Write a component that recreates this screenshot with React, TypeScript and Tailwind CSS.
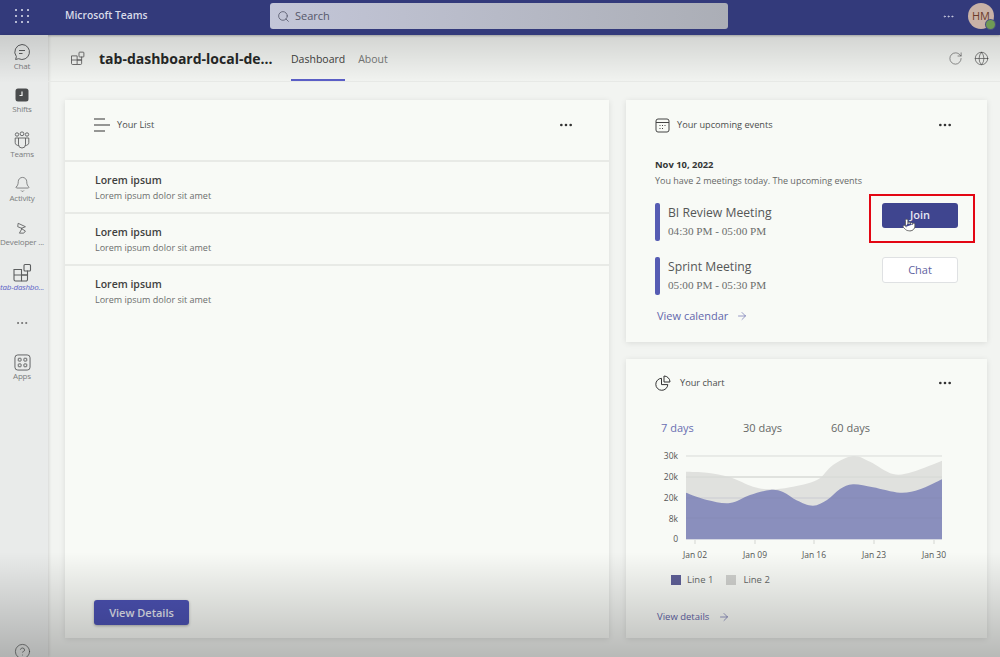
import {
  ArrowRight,
  Bell,
  CircleHelp,
  Globe,
  MoreHorizontal,
  Pointer,
  RotateCw,
  Search,
} from "lucide-react";
import type { ReactNode } from "react";

const purple: [number, number][] = [
  [686, 492.7], [707, 500], [730, 503], [750, 495], [770, 490], [783, 492], [797, 500.5], [813, 505.7],
  [827, 500], [840, 489], [853, 484.3], [873, 487.3], [900, 492.7], [920, 489.3], [942, 479.3],
];
const grey: [number, number][] = [
  [686, 471.7], [707, 472.7], [730, 477.3], [753, 486.7], [770, 489.3], [790, 487.3], [817, 480],
  [833, 465], [853, 456], [870, 461.7], [893, 474], [913, 471.7], [942, 460.7],
];

// catmull-rom to bezier, closed along the baseline
function areaPath(pts: [number, number][], base: number) {
  let d = `M${pts[0][0]} ${base} L${pts[0][0]} ${pts[0][1]}`;
  for (let i = 0; i < pts.length - 1; i++) {
    const p0 = pts[Math.max(i - 1, 0)];
    const p1 = pts[i];
    const p2 = pts[i + 1];
    const p3 = pts[Math.min(i + 2, pts.length - 1)];
    const c1x = p1[0] + (p2[0] - p0[0]) / 6;
    const c1y = p1[1] + (p2[1] - p0[1]) / 6;
    const c2x = p2[0] - (p3[0] - p1[0]) / 6;
    const c2y = p2[1] - (p3[1] - p1[1]) / 6;
    d += ` C${c1x} ${c1y} ${c2x} ${c2y} ${p2[0]} ${p2[1]}`;
  }
  return `${d} L${pts[pts.length - 1][0]} ${base} Z`;
}

function TabIcon({ className }: { className?: string }) {
  return (
    <svg viewBox="0 0 20 20" fill="none" stroke="currentColor" strokeWidth="1.1" className={className}>
      <path d="M2 6.500h7.500V18H3.500A1.500 1.500 0 0 1 2 16.500Z" />
      <path d="M2 12h13.500v4.500a1.500 1.500 0 0 1-1.500 1.500H9.500" />
      <path d="M9.500 12h6V7.500" />
      <rect x="12" y="1.500" width="6.500" height="6.500" rx="1" />
    </svg>
  );
}

function RailItem({ icon, label, className = "", active = false }: { icon: ReactNode; label: string; className?: string; active?: boolean }) {
  return (
    <div className={`flex w-full flex-col items-center ${className}`}>
      <div className="flex h-[18px] items-center justify-center text-[#5c5e5f]">{icon}</div>
      <span className={`text-center text-[8px] leading-[10px] tracking-[-0.2px] whitespace-nowrap ${active ? "italic text-[#5b5fc7]" : "text-[#7b7d7e]"}`}>
        {label}
      </span>
    </div>
  );
}

function Rail() {
  return (
    <aside className="flex w-[48px] shrink-0 flex-col items-center bg-[#e9ebea] pt-[8px] pr-[4px] shadow-[1px_0_3px_rgba(0,0,0,0.12)]">
      <RailItem
        label="Chat"
        icon={
          <svg viewBox="0 0 18 18" fill="none" stroke="currentColor" strokeWidth="1" className="size-[18px]">
            <path d="M9 1.500a7.500 7.500 0 1 1-3.400 14.200l-3 .8.800-2.900A7.500 7.500 0 0 1 9 1.500Z" />
            <path d="M6 7.500h6M6 10.500h3.500" />
          </svg>
        }
      />
      <RailItem
        label="Shifts"
        className="mt-[15px]"
        icon={
          <svg viewBox="0 0 14 14" className="size-[14px]">
            <rect width="13" height="13" x=".5" y=".5" rx="2.500" fill="#4a4c4d" />
            <path d="M7 3.500V7.500H4.500" fill="none" stroke="#f2f4f2" strokeWidth="1.200" />
          </svg>
        }
      />
      <RailItem
        label="Teams"
        className="mt-[17px]"
        icon={
          <svg viewBox="0 0 18 18" fill="none" stroke="currentColor" strokeWidth=".9" className="size-[18px]">
            <circle cx="4" cy="3.500" r="1.700" />
            <circle cx="9" cy="2.800" r="1.900" />
            <circle cx="14" cy="3.500" r="1.700" />
            <path d="M5.500 7h7v6.500a3.500 3.500 0 0 1-7 0Z" />
            <path d="M5.500 7H2.200v4.500A2.800 2.800 0 0 0 6 14.200M12.500 7h3.300v4.500a2.800 2.800 0 0 1-3.800 2.700" />
          </svg>
        }
      />
      <RailItem label="Activity" className="mt-[16px]" icon={<Bell className="size-[17px]" strokeWidth={1} />} />
      <RailItem
        label="Developer ..."
        className="mt-[16px]"
        icon={
          <svg viewBox="0 0 14 14" fill="none" stroke="currentColor" strokeWidth="1" className="size-[12px]">
            <path d="M2.500 1.500 11 5.500 6 7.500l5 3-2 2.500H4l3-5.500-5-2Z" />
          </svg>
        }
      />
      <RailItem label="tab-dashbo..." active className="mt-[17px]" icon={<TabIcon className="size-[20px]" />} />
      <MoreHorizontal className="mt-[24px] size-[14px] text-[#666]" strokeWidth={1.500} />
      <RailItem
        label="Apps"
        className="mt-[23px]"
        icon={
          <svg viewBox="0 0 18 18" fill="none" stroke="currentColor" strokeWidth="1" className="size-[17px]">
            <rect x="1" y="1" width="16" height="16" rx="3" />
            <rect x="4.500" y="4.500" width="3" height="3" rx=".5" />
            <rect x="10.500" y="4.500" width="3" height="3" rx=".5" />
            <rect x="4.500" y="10.500" width="3" height="3" rx=".5" />
            <rect x="10.500" y="10.500" width="3" height="3" rx=".5" />
          </svg>
        }
      />
      <CircleHelp className="mt-auto mb-[-3px] size-[17px] shrink-0 text-[#505252]" strokeWidth={1} />
    </aside>
  );
}

function CardTitle({ icon, title, iconGap }: { icon: ReactNode; title: string; iconGap: string }) {
  return (
    <div className={`flex items-center ${iconGap}`}>
      {icon}
      <span className="flex-1 text-[9.200px] font-medium text-[#4b4d4c]">{title}</span>
      <MoreHorizontal className="size-[16px] text-[#333]" strokeWidth={2} />
    </div>
  );
}

function ListRow({ last = false }: { last?: boolean }) {
  return (
    <div className={`h-[52px] pl-[30px] pt-[11px] ${last ? "" : "border-b-2 border-[#e8eae6]"}`}>
      <p className="text-[10.500px] leading-[15px] font-semibold text-[#3f4140]">Lorem ipsum</p>
      <p className="text-[9px] leading-[15px] text-[#6c6e6d]">Lorem ipsum dolor sit amet</p>
    </div>
  );
}

function Meeting({ title, time, children, className = "" }: { title: string; time: string; children: ReactNode; className?: string }) {
  return (
    <div className={`flex h-[38px] ${className}`}>
      <div className="w-[5px] rounded-[2px] bg-[#565cb3]" />
      <div className="ml-[8px] flex-1">
        <p className="text-[12.200px] leading-[20px] text-[#555756]">{title}</p>
        <p className="font-['Liberation_Serif',serif] text-[11.200px] leading-[16px] text-[#6b6d6c]">{time}</p>
      </div>
      {children}
    </div>
  );
}

function EventsCard() {
  return (
    <section className="h-[242px] bg-[#f8faf6] px-[29px] pt-[17px] shadow-[0_1px_6px_rgba(0,0,0,0.1)]">
      <CardTitle
        iconGap="gap-[7px] pr-[5px]"
        title="Your upcoming events"
        icon={
          <svg viewBox="0 0 15 15" fill="none" stroke="#444" strokeWidth="1" className="size-[15px]">
            <rect x="1" y="1" width="13" height="13" rx="2" />
            <path d="M1 4.500h13" />
            <path d="M4.500 7.500h1M7 7.500h1M9.500 7.500h1M4.500 10.500h1M7 10.500h1" strokeWidth="1.200" />
          </svg>
        }
      />
      <p className="mt-[25px] text-[9.400px] leading-[14px] font-bold text-[#333534]">Nov 10, 2022</p>
      <p className="mt-[2px] text-[9px] leading-[14px] text-[#666867]">You have 2 meetings today. The upcoming events</p>
      <Meeting title="BI Review Meeting" time="04:30 PM - 05:00 PM" className="mt-[15px]">
        <div className="relative h-[25px] w-[76px]">
          <button className="block h-full w-full rounded-[3px] bg-[#3f458f] text-[11px] font-semibold text-[#e6e7f2]">Join</button>
          <div className="absolute -top-[9px] -left-[13px] h-[49px] w-[106px] border-2 border-[#e30613]" />
          <Pointer className="absolute top-[15px] left-[20px] size-[14px] fill-white text-[#555]" strokeWidth={1.300} />
        </div>
      </Meeting>
      <Meeting title="Sprint Meeting" time="05:00 PM - 05:30 PM" className="mt-[16px]">
        <button className="h-[26px] w-[76px] rounded-[3px] border border-[#dfe1e3] bg-white text-[11px] font-medium text-[#5f639f]">
          Chat
        </button>
      </Meeting>
      <div className="mt-[13px] ml-[2px] flex items-center gap-[8px] text-[11px] leading-[16px] font-medium text-[#6367ac]">
        View calendar
        <ArrowRight className="size-[12px]" strokeWidth={1.300} />
      </div>
    </section>
  );
}

function ChartCard() {
  const gridY = [456, 477, 498, 518];
  const ticks = [695, 755, 814, 874, 934];
  const xLabels = ["Jan 02", "Jan 09", "Jan 16", "Jan 23", "Jan 30"];
  const yLabels: [string, number][] = [["30k", 459], ["20k", 480], ["20k", 501], ["8k", 522], ["0", 542]];
  return (
    <section className="min-h-0 flex-1 bg-[#f8faf6] px-[29px] pt-[16px] shadow-[0_1px_6px_rgba(0,0,0,0.1)]">
      <CardTitle
        iconGap="gap-[9px] pr-[5px]"
        title="Your chart"
        icon={
          <svg viewBox="0 0 16 16" fill="none" stroke="#333" strokeWidth="1" className="size-[16px]">
            <path d="M6.500 3.300a6 6 0 1 0 6.300 6.300H6.500Z" />
            <path d="M9 1a6 6 0 0 1 6 6H9Z" />
          </svg>
        }
      />
      <div className="mt-[29px] flex text-[11px] leading-[16px] text-[#666867]">
        <span className="ml-[6px] w-[82px] text-[#6a6eb2]">7 days</span>
        <span className="w-[88px]">30 days</span>
        <span>60 days</span>
      </div>
      <svg viewBox="650 448 310 120" className="mt-[12px] -ml-[5px] h-[120px] w-[310px]">
        {gridY.map((y) => (
          <line key={y} x1="686" x2="942" y1={y} y2={y} stroke="#d9dbd8" strokeWidth="1" />
        ))}
        <path d={areaPath(grey, 539)} fill="#e0e1de" />
        <line x1="686" x2="942" y1="477" y2="477" stroke="#d3d5d2" strokeWidth=".8" />
        <path d={areaPath(purple, 539)} fill="#8a8fbd" />
        {gridY.slice(2).map((y) => (
          <line key={y} x1="686" x2="942" y1={y} y2={y} stroke="#7c81ad" strokeWidth=".6" opacity=".35" />
        ))}
        <line x1="686" x2="942" y1="539.500" y2="539.500" stroke="#d4d6e2" />
        {ticks.map((x, i) => (
          <g key={x}>
            <line x1={x} x2={x} y1="540" y2="544" stroke="#d4d6d2" />
            <text x={x} y="558" textAnchor="middle" fontSize="8.500" fill="#555">{xLabels[i]}</text>
          </g>
        ))}
        {yLabels.map(([label, y]) => (
          <text key={y} x="678" y={y} textAnchor="end" fontSize="8.500" fill="#555">{label}</text>
        ))}
      </svg>
      <div className="mt-[5px] ml-[16px] flex items-center text-[9.500px] leading-[14px] text-[#666867]">
        <span className="size-[10px] bg-[#5f6098]" />
        <span className="ml-[6px]">Line 1</span>
        <span className="ml-[13px] size-[10px] bg-[#d0d1ce]" />
        <span className="ml-[7px]">Line 2</span>
      </div>
      <div className="mt-[23px] ml-[2px] flex items-center gap-[9px] text-[9.500px] leading-[14px] font-medium text-[#5f63a6]">
        View details
        <ArrowRight className="size-[12px]" strokeWidth={1.300} />
      </div>
    </section>
  );
}

export default function App() {
  return (
    <div className="relative flex h-[657px] w-[1000px] flex-col overflow-hidden bg-[#f2f4f1] font-['Open_Sans',sans-serif]">
      <header className="flex h-[35px] shrink-0 items-center bg-[#333a7b] pb-[3px] shadow-[0_1px_2px_rgba(0,0,0,0.25)]">
        <div className="ml-[15px] grid w-[14px] grid-cols-3 gap-[4px]">
          {Array.from({ length: 9 }).map((_, i) => (
            <span key={i} className="size-[2px] rounded-full bg-[#e2e4f0]" />
          ))}
        </div>
        <span className="ml-[36px] w-[205px] text-[10.300px] font-semibold text-[#d9dbe9]">Microsoft Teams</span>
        <div className="flex h-[26px] w-[458px] items-center gap-[5px] rounded-[3px] bg-gradient-to-r from-[#c3c6d8] to-[#abaeb6] pl-[7px] text-[#55576a]">
          <Search className="size-[13px]" strokeWidth={1.500} />
          <span className="text-[11px]">Search</span>
        </div>
        <MoreHorizontal className="ml-[214px] size-[13px] text-[#d0d2e4]" strokeWidth={1.500} />
        <div className="relative ml-[13px] flex size-[26px] items-center justify-center rounded-full bg-[#c9b2a7] text-[11px] font-medium text-[#6d3b2a]">
          HM
          <span className="absolute right-[-1px] bottom-[0px] size-[9px] rounded-full bg-[#6f9a55] ring-1 ring-[#49507f]" />
        </div>
      </header>

      <div className="flex min-h-0 flex-1">
        <Rail />
        <main className="flex min-w-0 flex-1 flex-col">
          <div className="flex h-[47px] shrink-0 items-center border-b border-[#e8eae7] pl-[22px] pr-[11px]">
            <TabIcon className="size-[15px] text-[#555]" />
            <h1 className="ml-[14px] w-[192px] text-[14px] font-bold whitespace-nowrap text-[#262827]">tab-dashboard-local-de...</h1>
            <div className="relative flex h-full items-center pt-[4px]">
              <span className="text-[10.500px] font-medium text-[#3f4140]">Dashboard</span>
              <span className="absolute right-0 bottom-0 left-0 h-[2px] bg-[#5b5fc7]" />
            </div>
            <span className="mt-[4px] ml-[13px] text-[10.500px] text-[#777978]">About</span>
            <RotateCw className="ml-auto size-[15px] text-[#555]" strokeWidth={1} />
            <Globe className="ml-[11px] size-[15px] text-[#444]" strokeWidth={1} />
          </div>

          <div className="flex min-h-0 flex-1 gap-[17px] pt-[18px] pb-[19px] pl-[17px] pr-[13px]">
            <section className="flex w-[544px] flex-col bg-[#f8faf6] shadow-[0_1px_6px_rgba(0,0,0,0.1)]">
              <div className="flex h-[62px] items-center border-b-2 border-[#e8eae6] pb-[10px] pl-[29px] pr-[35px]">
                <svg viewBox="0 0 16 14" stroke="#333" strokeWidth="1.200" className="h-[14px] w-[16px]">
                  <path d="M0 1h11M0 7h16M0 13h11" />
                </svg>
                <span className="ml-[7px] flex-1 text-[9.200px] font-medium text-[#4b4d4c]">Your List</span>
                <MoreHorizontal className="size-[16px] text-[#333]" strokeWidth={2} />
              </div>
              <ListRow />
              <ListRow />
              <ListRow last />
              <button className="mt-auto mb-[13px] ml-[29px] h-[25px] w-[95px] rounded-[3px] bg-[#4c52b4] pt-[2px] text-[11px] font-semibold text-[#e3e5ef] shadow-[0_1px_3px_rgba(0,0,0,0.3)]">
                View Details
              </button>
            </section>
            <div className="flex w-[361px] flex-col gap-[17px]">
              <EventsCard />
              <ChartCard />
            </div>
          </div>
        </main>
      </div>

      {/* video player shade, top and bottom */}
      <div className="pointer-events-none absolute top-[35px] right-0 left-0 h-[48px] bg-gradient-to-b from-[rgba(0,0,0,0.13)] to-transparent" />
      <div className="pointer-events-none absolute right-0 bottom-0 left-0 h-[105px] bg-gradient-to-b from-transparent to-[rgba(0,0,0,0.24)]" />
    </div>
  );
}
